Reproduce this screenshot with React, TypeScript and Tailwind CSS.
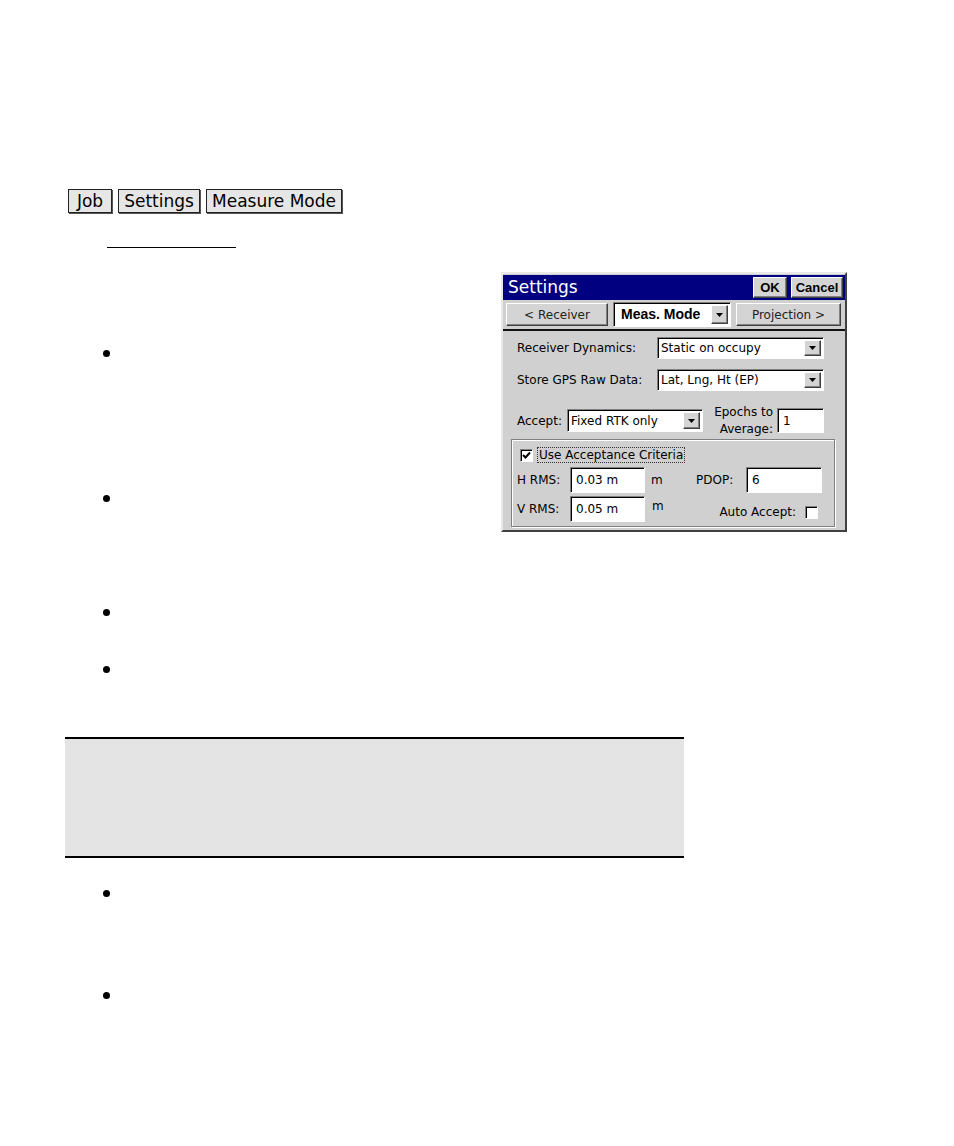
import React from "react";

const raised =
  "bg-[#d4d4d4] border border-t-white border-l-white border-r-[#404040] border-b-[#404040] shadow-[inset_-1px_-1px_0_#808080]";
const sunken =
  "bg-white border border-t-[#808080] border-l-[#808080] border-r-white border-b-white shadow-[inset_1px_1px_0_#000]";

function Arrow() {
  return (
    <div className={`${raised} w-[17px] h-full flex items-center justify-center shrink-0`}>
      <svg width="7" height="4" viewBox="0 0 7 4">
        <polygon points="0,0 7,0 3.5,4" fill="#000" />
      </svg>
    </div>
  );
}

function Combo({ text, w, h = 22 }: { text: string; w: string; h?: number }) {
  return (
    <div className={`${sunken} ${w} flex items-stretch p-[2px]`} style={{ height: h }}>
      <div className="flex-1 flex items-center pl-[1px] text-[12px] text-black whitespace-nowrap overflow-hidden">
        {text}
      </div>
      <Arrow />
    </div>
  );
}

function Input({ text, w, h }: { text: string; w: string; h: string }) {
  return (
    <div className={`${sunken} ${w} ${h} flex items-center pl-[5px] text-[12px]`}>{text}</div>
  );
}

function Check({ checked }: { checked: boolean }) {
  return (
    <div className={`${sunken} w-[13px] h-[13px] flex items-center justify-center`}>
      {checked && (
        <svg width="9" height="9" viewBox="0 0 9 9">
          <path d="M1 4 L3.5 6.5 L8 1.5" stroke="#000" strokeWidth="2" fill="none" />
        </svg>
      )}
    </div>
  );
}

function Bullet() {
  return <div className="w-[7px] h-[7px] rounded-full bg-black ml-[103px]" />;
}

function Crumb({ label, w }: { label: string; w: string }) {
  return (
    <div className={`${w} h-[24px] flex items-center justify-center bg-[#e6e6e6] border border-[#222] shadow-[1px_1px_0_#555] text-[17px] leading-none text-black`}>
      {label}
    </div>
  );
}

function Dialog() {
  return (
    <div className="w-[346px] h-[260px] bg-[#d0d0d0] border-2 border-t-[#e8e8e8] border-l-[#e8e8e8] border-r-[#404040] border-b-[#404040] flex flex-col font-['DejaVu_Sans',sans-serif]">
      <div className="h-[25px] mt-[1px] bg-[#000080] flex items-center pl-[5px] pr-[2px]">
        <div className="text-white text-[17px] leading-none flex-1">Settings</div>
        <div className={`${raised} w-[34px] h-[21px] flex items-center justify-center text-[13px] font-bold font-['Liberation_Sans',sans-serif]`}>OK</div>
        <div className={`${raised} w-[52px] h-[21px] ml-[4px] flex items-center justify-center text-[13px] font-bold font-['Liberation_Sans',sans-serif]`}>Cancel</div>
      </div>
      <div className="h-[29px] flex items-center pl-[3px] pr-[3px] gap-[5px]">
        <div className={`${raised} w-[102px] h-[23px] flex items-center justify-center text-[12px] text-[#222]`}>&lt; Receiver</div>
        <div className={`${sunken} w-[118px] h-[25px] flex items-stretch p-[2px]`}>
          <div className="flex-1 flex items-center pl-[5px] text-[14px] font-bold font-['Liberation_Sans',sans-serif]">Meas. Mode</div>
          <Arrow />
        </div>
        <div className={`${raised} w-[105px] h-[23px] flex items-center justify-center text-[12px] text-[#222]`}>Projection &gt;</div>
      </div>
      <div className="h-[2px] bg-[#111]" />
      <div className="flex flex-col pl-[14px] text-[12px] text-black">
        <div className="flex items-center mt-[6px] h-[22px]">
          <div className="w-[140px]">Receiver Dynamics:</div>
          <Combo text="Static on occupy" w="w-[167px]" />
        </div>
        <div className="flex items-center mt-[10px] h-[22px]">
          <div className="w-[140px]">Store GPS Raw Data:</div>
          <Combo text="Lat, Lng, Ht (EP)" w="w-[167px]" />
        </div>
        <div className="flex items-center mt-[17px] h-[25px]">
          <div className="w-[50px]">Accept:</div>
          <Combo text="Fixed RTK only" w="w-[136px]" h={23} />
          <div className="w-[70px] text-right leading-[17px] mr-[4px]">
            <div>Epochs to</div>
            <div>Average:</div>
          </div>
          <Input text="1" w="w-[47px]" h="h-[25px]" />
        </div>
        <div className="ml-[-6px] mt-[6px] w-[324px] h-[88px] border border-[#808080] shadow-[inset_1px_1px_0_#fff,1px_1px_0_#fff] px-[8px]">
          <div className="flex items-center mt-[8px] h-[14px]">
            <Check checked />
            <div className="ml-[5px] outline outline-1 outline-dotted outline-[#333] leading-[14px] px-[1px]">Use Acceptance Criteria</div>
          </div>
          <div className="flex items-center mt-[5px] h-[26px] -ml-[3px]">
            <div className="w-[53px]">H RMS:</div>
            <Input text="0.03 m" w="w-[75px]" h="h-[26px]" />
            <div className="ml-[6px] w-[45px]">m</div>
            <div className="w-[50px]">PDOP:</div>
            <Input text="6" w="w-[76px]" h="h-[26px]" />
          </div>
          <div className="flex items-center mt-[3px] h-[26px] -ml-[3px]">
            <div className="w-[53px]">V RMS:</div>
            <Input text="0.05 m" w="w-[75px]" h="h-[26px]" />
            <div className="ml-[7px] mb-[6px]">m</div>
            <div className="ml-auto mr-[8px] flex items-center mt-[6px]">
              <div className="mr-[9px]">Auto Accept:</div>
              <Check checked={false} />
            </div>
          </div>
        </div>
      </div>
    </div>
  );
}

export default function App() {
  return (
    <div className="w-[954px] h-[1146px] bg-white font-['DejaVu_Sans',sans-serif] pt-[189px]">
      <div className="flex gap-[6px] pl-[68px]">
        <Crumb label="Job" w="w-[44px]" />
        <Crumb label="Settings" w="w-[82px]" />
        <Crumb label="Measure Mode" w="w-[136px]" />
      </div>
      <div className="ml-[107px] mt-[34px] w-[129px] h-[1px] bg-black" />
      <div className="flex mt-[24px]">
        <div className="w-[501px] flex flex-col">
          <div className="mt-[78px]"><Bullet /></div>
          <div className="mt-[138px]"><Bullet /></div>
        </div>
        <Dialog />
      </div>
      <div className="mt-[77px]"><Bullet /></div>
      <div className="mt-[50px]"><Bullet /></div>
      <div className="ml-[65px] mt-[64px] w-[619px] h-[121px] bg-[#e4e4e4] border-y-2 border-black" />
      <div className="mt-[32px]"><Bullet /></div>
      <div className="mt-[95px]"><Bullet /></div>
    </div>
  );
}
